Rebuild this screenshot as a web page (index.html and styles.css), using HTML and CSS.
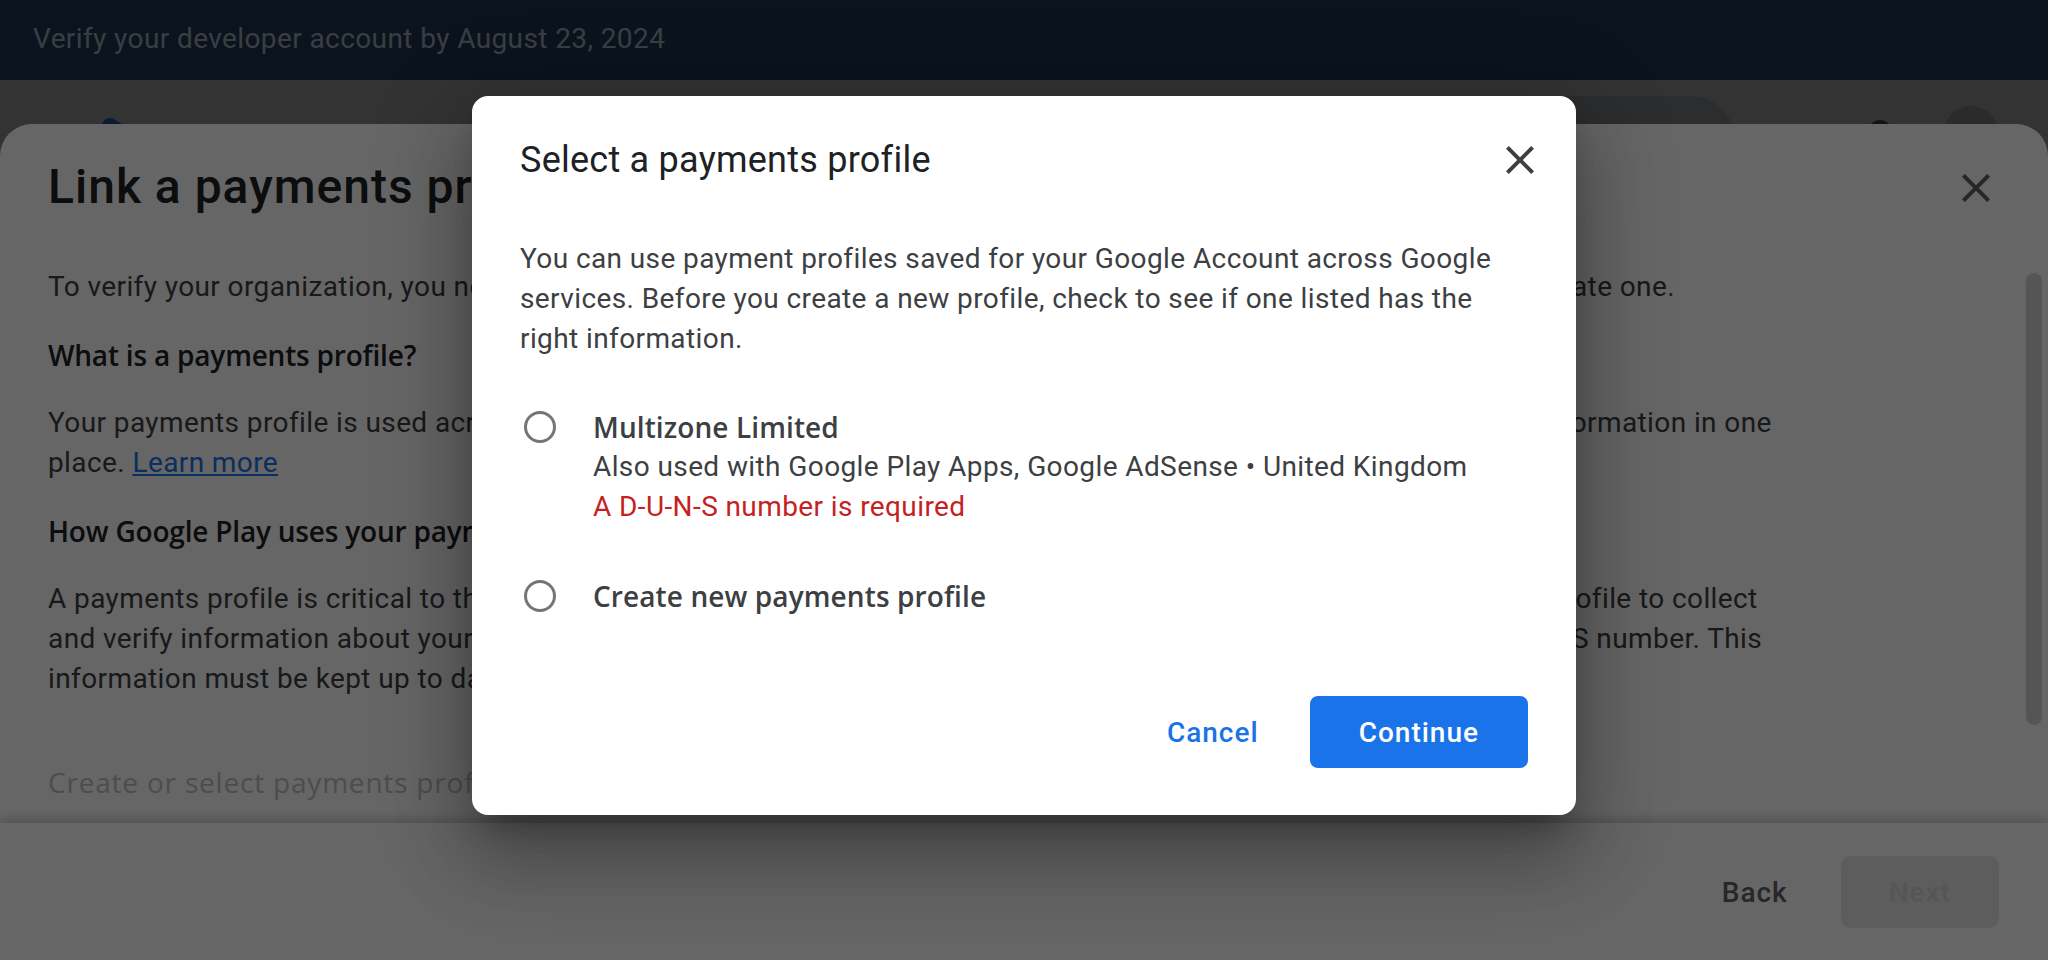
FILE: index.html
```html
<!DOCTYPE html>
<html lang="en">
<head>
<meta charset="utf-8">
<title>Select a payments profile</title>
<link rel="stylesheet" href="styles.css">
</head>
<body>
<div class="banner">Verify your developer account by August 23, 2024</div>
<div class="page">
  <header class="appbar">
    <svg class="logo" viewBox="0 0 72 80" aria-hidden="true">
      <path d="M10 8 L62 40 L10 72 Z" fill="#4285f4" stroke="#4285f4" stroke-width="16" stroke-linejoin="round"/>
    </svg>
    <div class="search"></div>
    <span class="appbar-icon"></span>
    <span class="avatar"></span>
  </header>
  <div class="sheet-scrim"></div>
  <section class="sheet">
    <div class="sheet-header">
      <h1 class="sheet-title">Link a payments profile</h1>
      <button class="icon-btn sheet-close" aria-label="Close">
        <svg viewBox="0 0 24 24" width="48" height="48"><path fill="currentColor" d="M19 6.41L17.59 5 12 10.59 6.41 5 5 6.41 10.59 12 5 17.59 6.41 19 12 13.41 17.59 19 19 17.59 13.41 12z"/></svg>
      </button>
    </div>
    <div class="sheet-body">
      <div class="sheet-content">
        <p>To verify your organization, you need to link a payments profile to your account. You can select an existing profile or create one.</p>
        <h2>What is a payments profile?</h2>
        <p>Your payments profile is used across Google products and services, and securely stores your business and payment information in one<br>place. <a class="link" href="#">Learn more</a></p>
        <h2>How Google Play uses your payments profile</h2>
        <p>A payments profile is critical to the developer verification process. Google Play uses information from your payments profile to collect<br>and verify information about your organization, such as its full legal name, business address, phone number, and D-U-N-S number. This<br>information must be kept up to date.</p>
        <h3 class="step">Create or select payments profile</h3>
      </div>
      <div class="scrollbar"></div>
    </div>
    <footer class="sheet-footer">
      <button class="btn btn-plain">Back</button>
      <button class="btn btn-disabled">Next</button>
    </footer>
  </section>
</div>
<div class="modal-scrim"></div>
<div class="dialog" role="dialog">
  <div class="dialog-header">
    <h2 class="dialog-title">Select a payments profile</h2>
    <button class="icon-btn dialog-close" aria-label="Close">
      <svg viewBox="0 0 24 24" width="48" height="48"><path fill="currentColor" d="M19 6.41L17.59 5 12 10.59 6.41 5 5 6.41 10.59 12 5 17.59 6.41 19 12 13.41 17.59 19 19 17.59 13.41 12z"/></svg>
    </button>
  </div>
  <p class="dialog-text">You can use payment profiles saved for your Google Account across Google<br>services. Before you create a new profile, check to see if one listed has the<br>right information.</p>
  <div class="options">
    <div class="option">
      <span class="radio"></span>
      <div class="option-text">
        <div class="option-label">Multizone Limited</div>
        <div class="option-meta">Also used with Google Play Apps, Google AdSense • United Kingdom</div>
        <div class="option-error">A D-U-N-S number is required</div>
      </div>
    </div>
    <div class="option">
      <span class="radio"></span>
      <div class="option-text">
        <div class="option-label">Create new payments profile</div>
      </div>
    </div>
  </div>
  <div class="actions">
    <button class="btn btn-text">Cancel</button>
    <button class="btn btn-filled">Continue</button>
  </div>
</div>
</body>
</html>
```
FILE: styles.css
```css
* { box-sizing: border-box; }
html, body { margin: 0; padding: 0; }
body {
  position: relative;
  width: 2048px;
  height: 960px;
  overflow: hidden;
  background: #fff;
  font-family: Roboto, "Noto Sans", Arial, sans-serif;
  letter-spacing: 0.4px;
}

.banner {
  height: 80px;
  padding-left: 33px;
  background: #1c344b;
  color: #919ba5;
  font-size: 28px;
  line-height: 77px;
}

.page {
  position: relative;
  height: 880px;
  background: #fff;
}

.appbar {
  display: flex;
  align-items: flex-start;
  height: 120px;
  padding: 16px 49px 0 100px;
}
.logo { width: 72px; height: 80px; margin-top: 22px; flex: none; }
.search {
  margin-left: auto;
  width: 1000px;
  height: 88px;
  border-radius: 44px;
  background: #dfe2ea;
}
.appbar-icon {
  width: 24px; height: 24px;
  margin: 24px 0 0 133px;
  border-radius: 50%;
  background: #5f6368;
}
.avatar {
  width: 56px; height: 56px;
  margin: 10px 0 0 51px;
  border-radius: 50%;
  background: #d4d6d6;
}

.sheet-scrim {
  position: absolute;
  inset: 0;
  background: rgba(0, 0, 0, 0.5);
}

.sheet {
  position: absolute;
  z-index: 0;
  top: 44px; left: 0; right: 0; bottom: 0;
  display: flex;
  flex-direction: column;
  background: #fff;
  border-radius: 32px 32px 0 0;
  overflow: hidden;
}
.sheet-header {
  flex: none;
  height: 91px;
  display: flex;
  align-items: flex-start;
  justify-content: space-between;
  padding: 35px 44px 0 48px;
}
.sheet-title {
  margin: 0;
  font-size: 48px;
  line-height: 56px;
  font-weight: 500;
  letter-spacing: 1px;
  color: #202124;
  white-space: nowrap;
}
.icon-btn {
  display: grid;
  place-items: center;
  padding: 0;
  border: 0;
  background: none;
}
.sheet-close { width: 56px; height: 56px; margin-top: 1px; color: #5f6368; }

.sheet-body { flex: 1; min-height: 0; display: flex; }
.sheet-content {
  flex: 1;
  overflow: hidden;
  padding: 52px 0 0 48px;
  color: #3c4043;
  font-size: 28px;
  line-height: 40px;
}
.sheet-content p { margin: 0 0 28px; white-space: nowrap; }
.sheet-content h2 {
  margin: 0 0 28px;
  font-family: "Open Sans", Roboto, sans-serif;
  font-size: 28px;
  line-height: 40px;
  font-weight: 600;
  letter-spacing: -0.2px;
  color: #202124;
  white-space: nowrap;
}
.link { color: #1a73e8; text-decoration: underline; }
.step {
  margin: 63px 0 0;
  font-family: "Open Sans", Roboto, sans-serif;
  font-size: 28px;
  line-height: 40px;
  font-weight: 400;
  letter-spacing: 0.8px;
  color: #bdc1c6;
  white-space: nowrap;
}
.scrollbar {
  flex: none;
  width: 16px;
  height: 452px;
  margin: 58px 6px 0 0;
  border-radius: 8px;
  background: #d5d5d5;
}

.sheet-footer {
  position: relative;
  z-index: 1;
  flex: none;
  height: 137px;
  display: flex;
  justify-content: flex-end;
  align-items: flex-start;
  gap: 21px;
  padding: 33px 49px 0 0;
  background: #fff;
  box-shadow: 0 -4px 10px rgba(0, 0, 0, 0.2);
}

.btn {
  height: 72px;
  border: 0;
  border-radius: 10px;
  background: none;
  font-family: inherit;
  font-size: 28px;
  font-weight: 500;
  letter-spacing: 1px;
}
.btn-plain { padding: 0 32px; color: #5f6368; }
.btn-disabled { padding: 0 48px; background: #e6e8e6; color: #d7d7d7; }

.modal-scrim {
  position: absolute;
  inset: 0;
  background: rgba(0, 0, 0, 0.6);
}

.dialog {
  position: absolute;
  top: 96px;
  left: 472px;
  width: 1104px;
  height: 719px;
  display: flex;
  flex-direction: column;
  padding: 40px 48px 47px;
  background: #fff;
  border-radius: 16px;
  box-shadow: 0 22px 30px -14px rgba(0, 0, 0, 0.3),
              0 48px 76px 6px rgba(0, 0, 0, 0.2),
              0 18px 92px 16px rgba(0, 0, 0, 0.16);
}
.dialog-header {
  display: flex;
  align-items: center;
  justify-content: space-between;
  height: 48px;
}
.dialog-title {
  margin: 0;
  font-size: 36px;
  line-height: 48px;
  font-weight: 400;
  letter-spacing: 0.25px;
  color: #202124;
}
.dialog-close { width: 48px; height: 48px; margin-right: -16px; color: #3c4043; }
.dialog-text {
  margin: 55px 0 0;
  font-size: 28px;
  line-height: 40px;
  color: #3c4043;
}
.options {
  margin-top: 48px;
  display: flex;
  flex-direction: column;
  gap: 49px;
}
.option {
  display: flex;
  align-items: flex-start;
  gap: 37px;
  padding-left: 4px;
}
.radio {
  flex: none;
  width: 32px;
  height: 32px;
  margin-top: 4px;
  border: 3px solid #757575;
  border-radius: 50%;
}
.option-text { font-size: 28px; line-height: 40px; color: #3c4043; }
.option-label {
  font-family: "Open Sans", Roboto, sans-serif;
  font-weight: 600;
  letter-spacing: 0.1px;
}
.option-error { color: #c5221f; }

.actions {
  margin-top: auto;
  display: flex;
  justify-content: flex-end;
  gap: 19px;
}
.btn-text { padding: 0 32px; color: #1a73e8; border-radius: 8px; }
.btn-filled { padding: 0 49px; background: #1a73e8; color: #fff; border-radius: 8px; }
```
